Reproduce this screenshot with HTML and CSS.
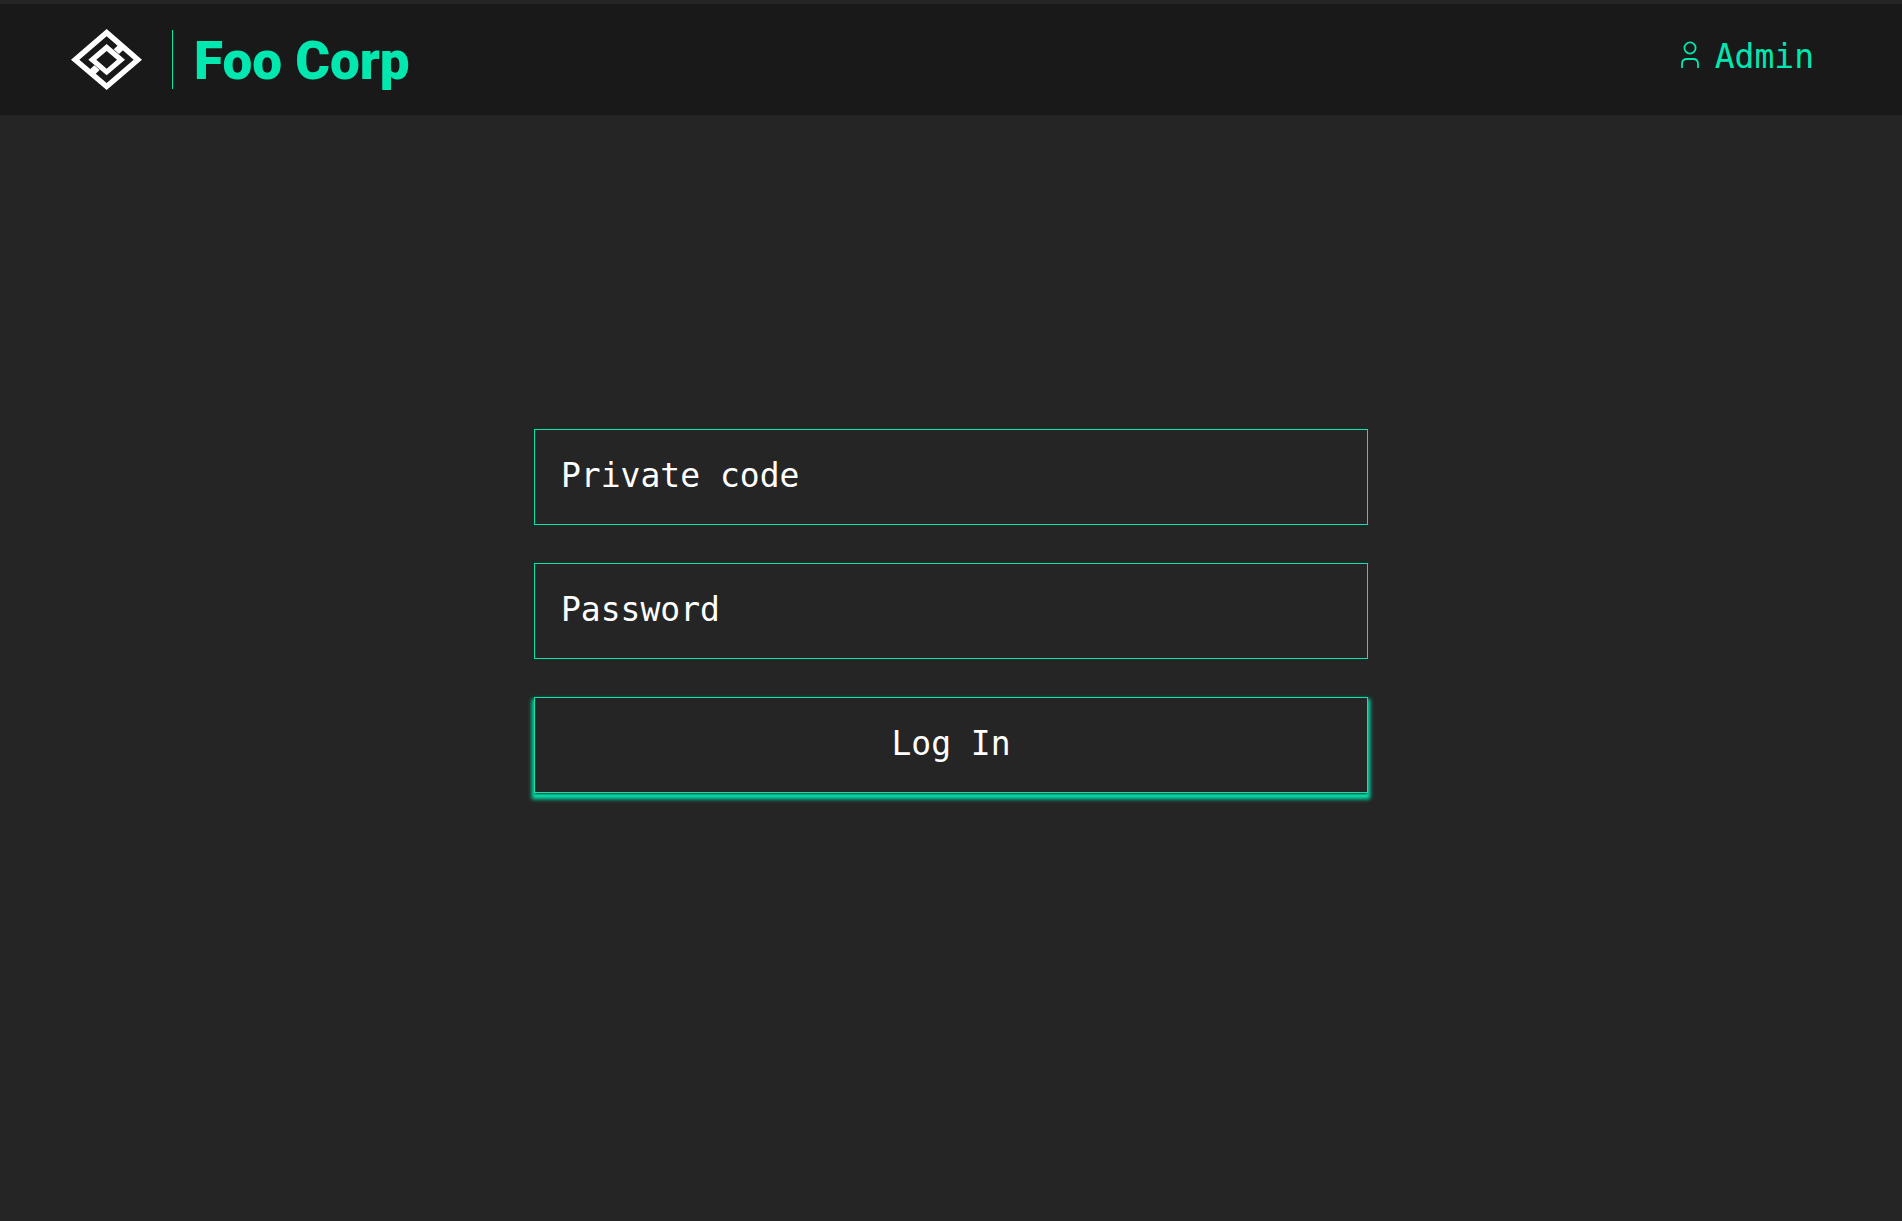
FILE: index.html
```html
<!DOCTYPE html>
<html lang="en">
<head>
<meta charset="utf-8">
<meta name="viewport" content="width=device-width, initial-scale=1">
<title>Foo Corp</title>
<link rel="stylesheet" href="styles.css">
</head>
<body>
<header class="header">
  <div class="brand">
    <svg class="logo" viewBox="32 28 213 183" aria-hidden="true">
      <path fill="#fff" fill-rule="evenodd" d="M32 120 139 28 245 120 139 211ZM57 120 139 190 220 120 139 50Z"/>
      <path fill="#fff" fill-rule="evenodd" d="M84 120 139 73 194 120 139 167ZM108 120 139 147 170 120 139 94Z"/>
      <path fill="#fff" d="M175 75 191 89 176 103 160 89ZM103 165 87 151 102 137 118 151Z"/>
    </svg>
    <h1 class="name">Foo Corp</h1>
  </div>
  <a class="admin" href="#">
    <svg class="user" viewBox="0 0 18 27" aria-hidden="true">
      <circle cx="9" cy="7" r="5.6"/>
      <path d="M1 27V23Q1 18 6 18H12Q17 18 17 23V27"/>
    </svg>
    <span>Admin</span>
  </a>
</header>
<main class="main">
  <form class="login">
    <input class="field" type="text" placeholder="Private code" aria-label="Private code">
    <input class="field" type="password" placeholder="Password" aria-label="Password">
    <button class="field submit" type="button">Log In</button>
  </form>
</main>
</body>
</html>
```
FILE: styles.css
```css
* {
  box-sizing: border-box;
}

body {
  display: flex;
  flex-direction: column;
  min-height: 100vh;
  margin: 0;
  background: #252525;
  color: #fff;
  font-family: "DejaVu Sans Mono", monospace;
  font-size: 33px;
}

.header {
  display: flex;
  align-items: center;
  justify-content: space-between;
  padding: 25px 88px 25px 71px;
  border-top: 4px solid #252525;
  background: #191919;
}

.brand {
  display: flex;
  align-items: center;
  gap: 30px;
}

.logo {
  width: 71px;
  height: 61px;
}

.name {
  margin: 0;
  padding: 4px 0 0 21px;
  border-left: 1px solid #00e8b0;
  color: #00e8b0;
  font-family: Roboto, sans-serif;
  font-size: 53px;
  font-weight: 900;
  line-height: 55px;
}

.admin {
  display: flex;
  align-items: center;
  gap: 16px;
  padding-bottom: 6px;
  color: #00e8b0;
  line-height: 40px;
  text-decoration: none;
}

.user {
  width: 18px;
  height: 27px;
  margin-bottom: 5px;
  fill: none;
  stroke: #00e8b0;
  stroke-width: 1.8;
}

.main {
  display: flex;
  flex: 1;
  align-items: center;
  justify-content: center;
  padding: 0 32px 114px;
}

.login {
  display: flex;
  flex-direction: column;
  gap: 38px;
  width: 100%;
  max-width: 834px;
}

.field {
  width: 100%;
  height: 96px;
  padding: 0 26px 4px;
  border: 1px solid #00e8b0;
  border-radius: 0;
  outline: 0;
  background: #252525;
  color: #fff;
  font: inherit;
}

.field::placeholder {
  color: #fff;
  opacity: 1;
}

.submit {
  box-shadow: 0 2px 2px -1px #252525, 0 4px 4px 2px #00e8b0;
  cursor: pointer;
}
```
